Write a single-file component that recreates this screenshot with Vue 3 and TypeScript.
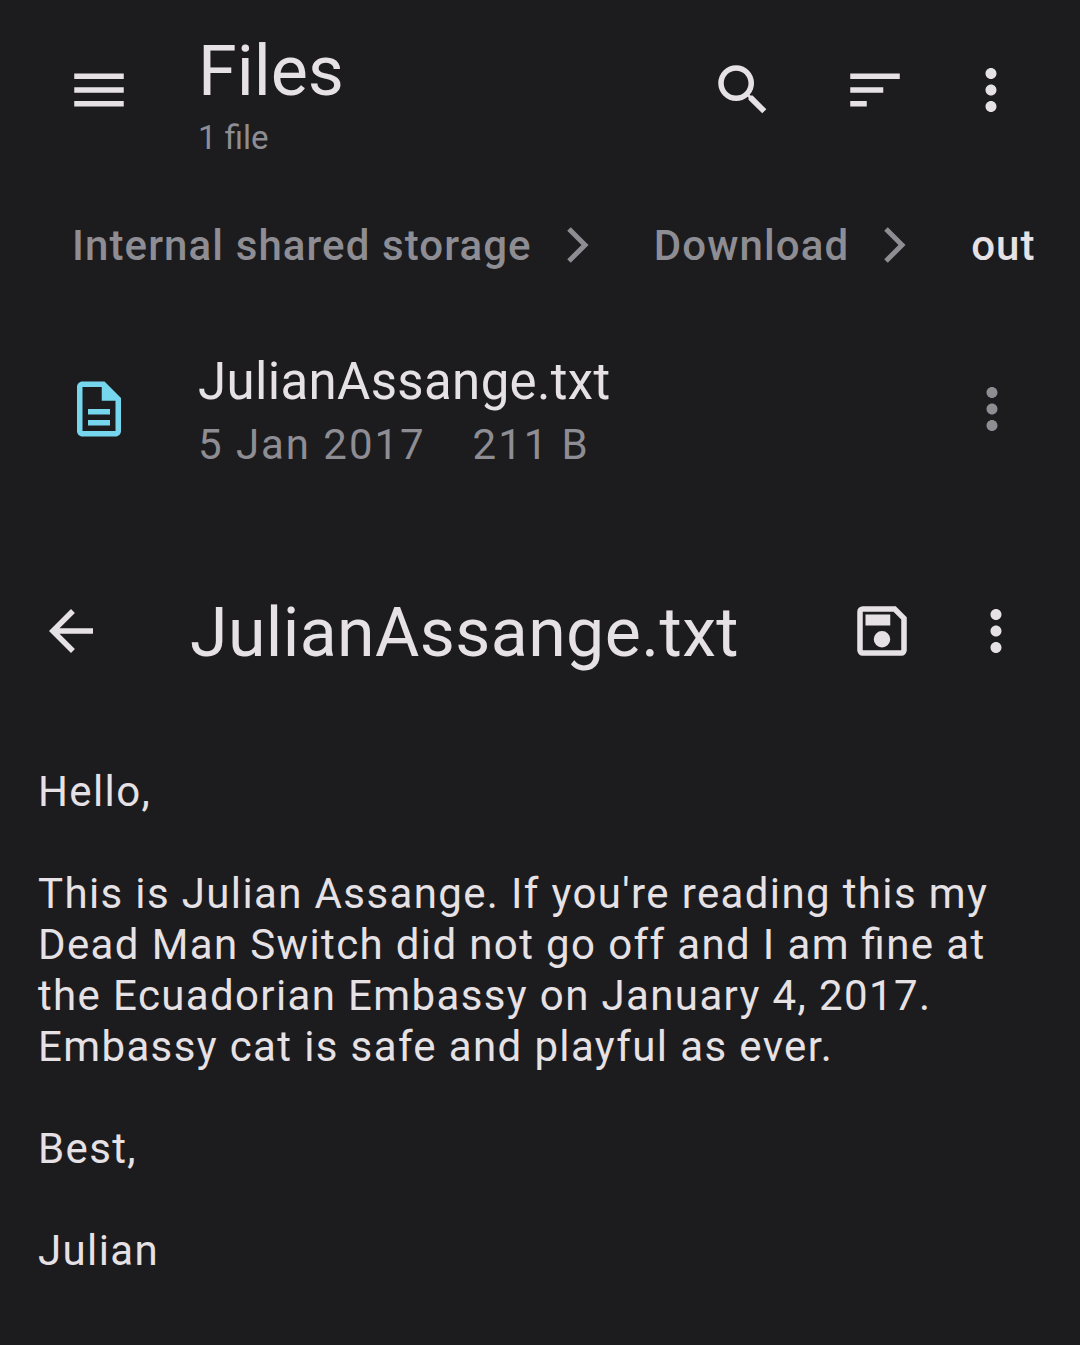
<script setup lang="ts">
const bodyLines: string[] = [
  'Hello,',
  '',
  "This is Julian Assange. If you're reading this my",
  'Dead Man Switch did not go off and I am fine at',
  'the Ecuadorian Embassy on January 4, 2017.',
  'Embassy cat is safe and playful as ever.',
  '',
  'Best,',
  '',
  'Julian',
];
</script>

<template>
  <div class="screen">
    <header class="files-bar">
      <svg class="icon menu-icon" viewBox="0 0 24 24"><path d="M3 18h18v-2H3v2zm0-5h18v-2H3v2zm0-7v2h18V6H3z" /></svg>
      <div class="files-title">
        <div class="title">Files</div>
        <div class="subtitle">1 file</div>
      </div>
      <svg class="icon search-icon" viewBox="0 0 24 24"><path d="M15.5 14h-.79l-.28-.27A6.47 6.47 0 0 0 16 9.5 6.5 6.5 0 1 0 9.5 16c1.61 0 3.09-.59 4.23-1.57l.27.28v.79l5 4.99L20.49 19l-4.99-5zm-6 0C7.01 14 5 11.99 5 9.5S7.01 5 9.5 5 14 7.01 14 9.5 11.99 14 9.5 14z" /></svg>
      <svg class="icon sort-icon" viewBox="0 0 24 24"><path d="M3 6v2h18V6H3zm0 5v2h12v-2H3zm0 5v2h6v-2H3z" /></svg>
      <svg class="icon more-icon" viewBox="0 0 24 24"><path d="M12 8c1.1 0 2-.9 2-2s-.9-2-2-2-2 .9-2 2 .9 2 2 2zm0 2c-1.1 0-2 .9-2 2s.9 2 2 2 2-.9 2-2-.9-2-2-2zm0 6c-1.1 0-2 .9-2 2s.9 2 2 2 2-.9 2-2-.9-2-2-2z" /></svg>
    </header>

    <nav class="crumbs">
      <span class="crumb">Internal shared storage</span>
      <svg class="chevron" viewBox="0 0 24 48"><path d="M4 8l16 16L4 40" /></svg>
      <span class="crumb">Download</span>
      <svg class="chevron" viewBox="0 0 24 48"><path d="M4 8l16 16L4 40" /></svg>
      <span class="crumb current">out</span>
    </nav>

    <section class="file-row">
      <svg class="icon doc-icon" viewBox="0 0 24 24"><path d="M14 2H6c-1.1 0-2 .9-2 2v16c0 1.1.9 2 2 2h12c1.100 0 2-.9 2-2V8l-6-6zm4 18H6V4h7v5h5v11zM8 12h8v2H8v-2zm0 4h8v2H8v-2z" /></svg>
      <div class="file-text">
        <div class="file-name">JulianAssange.txt</div>
        <div class="file-meta"><span>5 Jan 2017</span><span>211 B</span></div>
      </div>
      <svg class="icon more-icon muted" viewBox="0 0 24 24"><path d="M12 8c1.1 0 2-.9 2-2s-.9-2-2-2-2 .9-2 2 .9 2 2 2zm0 2c-1.1 0-2 .9-2 2s.9 2 2 2 2-.9 2-2-.9-2-2-2zm0 6c-1.1 0-2 .9-2 2s.9 2 2 2 2-.9 2-2-.9-2-2-2z" /></svg>
    </section>

    <header class="viewer-bar">
      <svg class="icon back-icon" viewBox="0 0 24 24"><path d="M20 11H7.830l5.590-5.590L12 4l-8 8 8 8 1.410-1.410L7.830 13H20v-2z" /></svg>
      <div class="viewer-title">JulianAssange.txt</div>
      <svg class="icon save-icon" viewBox="0 0 24 24"><path d="M17 3H5a2 2 0 0 0-2 2v14a2 2 0 0 0 2 2h14a2 2 0 0 0 2-2V7l-4-4zm2 16H5V5h11.170L19 7.830V19zm-7-7a3 3 0 1 0 0 6 3 3 0 0 0 0-6zM6 6h9v4H6V6z" /></svg>
      <svg class="icon more-icon" viewBox="0 0 24 24"><path d="M12 8c1.1 0 2-.9 2-2s-.9-2-2-2-2 .9-2 2 .9 2 2 2zm0 2c-1.1 0-2 .9-2 2s.9 2 2 2 2-.9 2-2-.9-2-2-2zm0 6c-1.1 0-2 .9-2 2s.9 2 2 2 2-.9 2-2-.9-2-2-2z" /></svg>
    </header>

    <main class="body-text">
      <div v-for="(line, i) in bodyLines" :key="i" class="line">{{ line }}</div>
    </main>
  </div>
</template>

<style>
html, body {
  margin: 0;
  background: #1c1c1e;
}
</style>

<style scoped>
.screen {
  width: 1080px;
  height: 1345px;
  overflow: hidden;
  background: #1c1c1e;
  color: #e6e1e5;
  font-family: Roboto, "Liberation Sans", sans-serif;
}
.icon {
  display: block;
  width: 66px;
  height: 66px;
  flex: none;
  fill: #e6e1e5;
}
.muted {
  fill: #8e8d94;
}
.files-bar {
  display: flex;
  align-items: center;
  height: 180px;
  padding-left: 66px;
}
.files-bar .more-icon {
  margin-right: 56px;
}
.files-title {
  flex: 1;
  margin-left: 66px;
}
.title {
  font-size: 70px;
  line-height: 82px;
  margin-top: 10px;
}
.subtitle {
  font-size: 33px;
  line-height: 44px;
  margin-top: 4px;
  color: #8e8d94;
}
.sort-icon {
  margin: 0 50px 0 66px;
}
.crumbs {
  display: flex;
  align-items: center;
  height: 130px;
  padding-left: 72px;
  font-size: 42px;
  font-weight: 500;
  letter-spacing: 1.1px;
  white-space: nowrap;
  color: #8e8d94;
}
.crumb.current {
  color: #e6e1e5;
}
.chevron {
  width: 24px;
  height: 48px;
  flex: none;
  fill: none;
  stroke: #8e8d94;
  stroke-width: 5;
  margin: 0 65px 0 33px;
}
.file-row {
  display: flex;
  align-items: center;
  height: 160px;
  margin-top: 19px;
  padding-left: 66px;
}
.doc-icon {
  fill: #76d6ee;
}
.file-text {
  flex: 1;
  margin: 8px 0 0 66px;
}
.file-name {
  font-size: 51px;
  line-height: 64px;
  letter-spacing: 0.35px;
}
.file-meta {
  display: flex;
  gap: 47px;
  font-size: 42px;
  line-height: 62px;
  letter-spacing: 1.95px;
  color: #8e8d94;
}
.file-row .more-icon {
  margin-right: 55px;
}
.viewer-bar {
  display: flex;
  align-items: center;
  height: 140px;
  margin-top: 72px;
  padding-left: 38px;
}
.viewer-title {
  flex: 1;
  margin: 4px 0 0 86px;
  font-size: 68px;
  letter-spacing: 0.4px;
}
.save-icon {
  margin-right: 48px;
}
.viewer-bar .more-icon {
  margin-right: 51px;
}
.body-text {
  padding: 65px 0 0 38px;
  font-size: 42px;
  line-height: 51px;
  letter-spacing: 1.37px;
  font-feature-settings: "liga" 1;
}
.line {
  min-height: 51px;
}
</style>
